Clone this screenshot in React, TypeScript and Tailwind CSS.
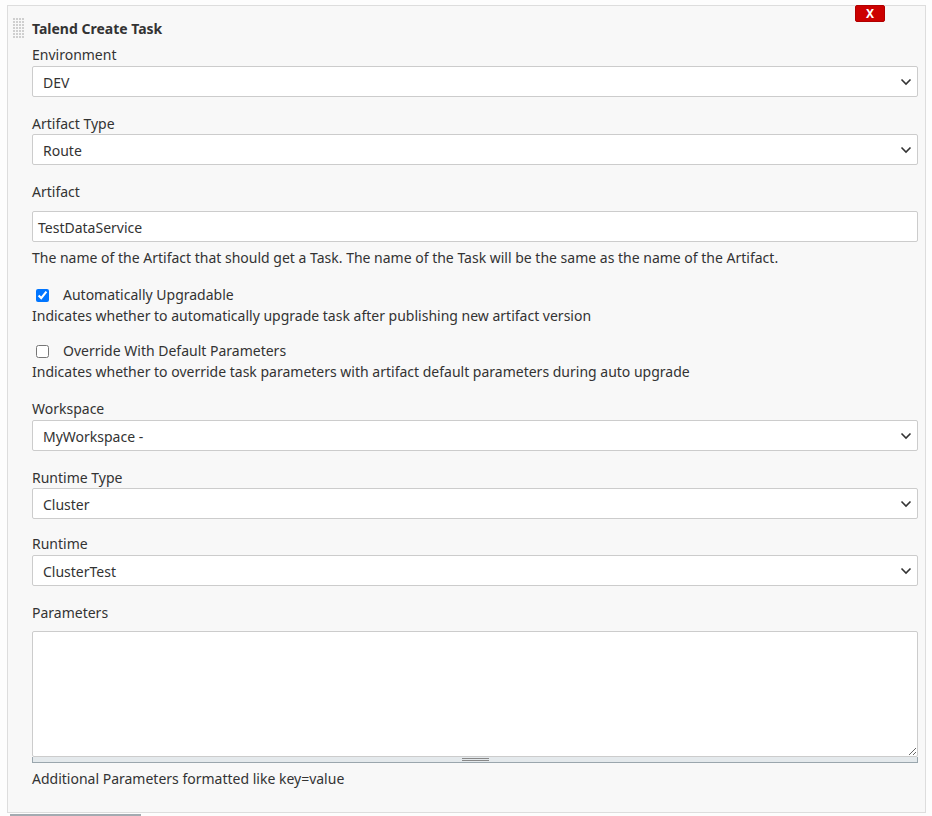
import React from "react";

function Chevron() {
  return (
    <svg width="12" height="8" viewBox="0 0 12 8" className="shrink-0">
      <path d="M1.5 1.5 L6 6 L10.5 1.5" fill="none" stroke="#333" strokeWidth="1.6" />
    </svg>
  );
}

function Select({ value, mt }: { value: string; mt: string }) {
  return (
    <div
      className={`${mt} flex h-[31px] w-full items-center justify-between rounded-[2px] border border-[#cccccc] bg-white pl-[10px] pr-[5px] text-[14px] text-[#333333]`}
    >
      <span className="pt-[2px]">{value}</span>
      <Chevron />
    </div>
  );
}

function Handle() {
  const dots: React.ReactNode[] = [];
  for (let r = 0; r < 7; r++) {
    for (let c = 0; c < 4; c++) {
      dots.push(<rect key={`${r}-${c}`} x={c * 3} y={r * 3} width="2" height="2" fill="#cfcfcf" />);
    }
  }
  return (
    <svg width="12" height="21" viewBox="0 0 12 21" className="absolute left-[5px] top-[12px]">
      {dots}
    </svg>
  );
}

export default function App() {
  return (
    <div
      className="min-h-[816px] bg-[#fdfdfd] pt-[5px] text-[14px] leading-[20px] text-[#333333]"
      style={{ fontFamily: '"Noto Sans", "DejaVu Sans", sans-serif' }}
    >
      <div className="relative ml-[7px] w-[919px] border border-[#dddddd] bg-[#f8f8f8] pb-[23px] pl-[24px] pt-[13px]">
        <Handle />
        <div className="absolute right-[40px] top-[-1px] flex h-[17px] w-[30px] items-center justify-center rounded-[2px] border border-[#b00000] bg-[#cc0000] text-[12px] font-bold leading-none text-white">
          X
        </div>
        <div className="flex w-[886px] flex-col">
          <div className="font-bold">Talend Create Task</div>

          <div className="mt-[6px]">Environment</div>
          <Select value="DEV" mt="mt-[1px]" />

          <div className="mt-[17px]">Artifact Type</div>
          <Select value="Route" mt="mt-0" />

          <div className="mt-[17px]">Artifact</div>
          <div className="mt-[9px] flex h-[31px] w-full items-center rounded-[2px] border border-[#cccccc] bg-white px-[5px]">
            <span className="pt-[2px]">TestDataService</span>
          </div>
          <div className="mt-[6px]">
            The name of the Artifact that should get a Task. The name of the Task will be the same as the name of the Artifact.
          </div>

          <label className="mt-[17px] flex h-[20px] items-center">
            <input type="checkbox" defaultChecked className="m-0 ml-[4px] h-[13px] w-[13px]" />
            <span className="ml-[14px]">Automatically Upgradable</span>
          </label>
          <div className="mt-[1px]">Indicates whether to automatically upgrade task after publishing new artifact version</div>

          <label className="mt-[15px] flex h-[20px] items-center">
            <input type="checkbox" className="m-0 ml-[4px] h-[13px] w-[13px]" />
            <span className="ml-[14px]">Override With Default Parameters</span>
          </label>
          <div className="mt-[1px]">Indicates whether to override task parameters with artifact default parameters during auto upgrade</div>

          <div className="mt-[17px]">Workspace</div>
          <Select value="MyWorkspace -" mt="mt-[1px]" />

          <div className="mt-[17px]">Runtime Type</div>
          <Select value="Cluster" mt="mt-0" />

          <div className="mt-[15px]">Runtime</div>
          <Select value="ClusterTest" mt="mt-[1px]" />

          <div className="mt-[17px]">Parameters</div>
          <textarea className="mt-[8px] block h-[126px] w-full resize-y rounded-[2px] border border-[#cccccc] bg-white p-[5px] outline-none" />
          <div className="flex h-[6px] w-full justify-center border-b border-l border-r border-[#9aa6ad] bg-[#e4e9ec]">
            <div className="flex w-[27px] flex-col gap-[1px] pt-[1px]">
              <div className="h-[1px] bg-[#888888]" />
              <div className="h-[1px] bg-[#888888]" />
            </div>
          </div>
          <div className="mt-[6px]">Additional Parameters formatted like key=value</div>
        </div>
      </div>
      <div className="ml-[10px] mt-[1px] h-[3px] w-[131px] bg-[#a3abb1]" />
    </div>
  );
}
